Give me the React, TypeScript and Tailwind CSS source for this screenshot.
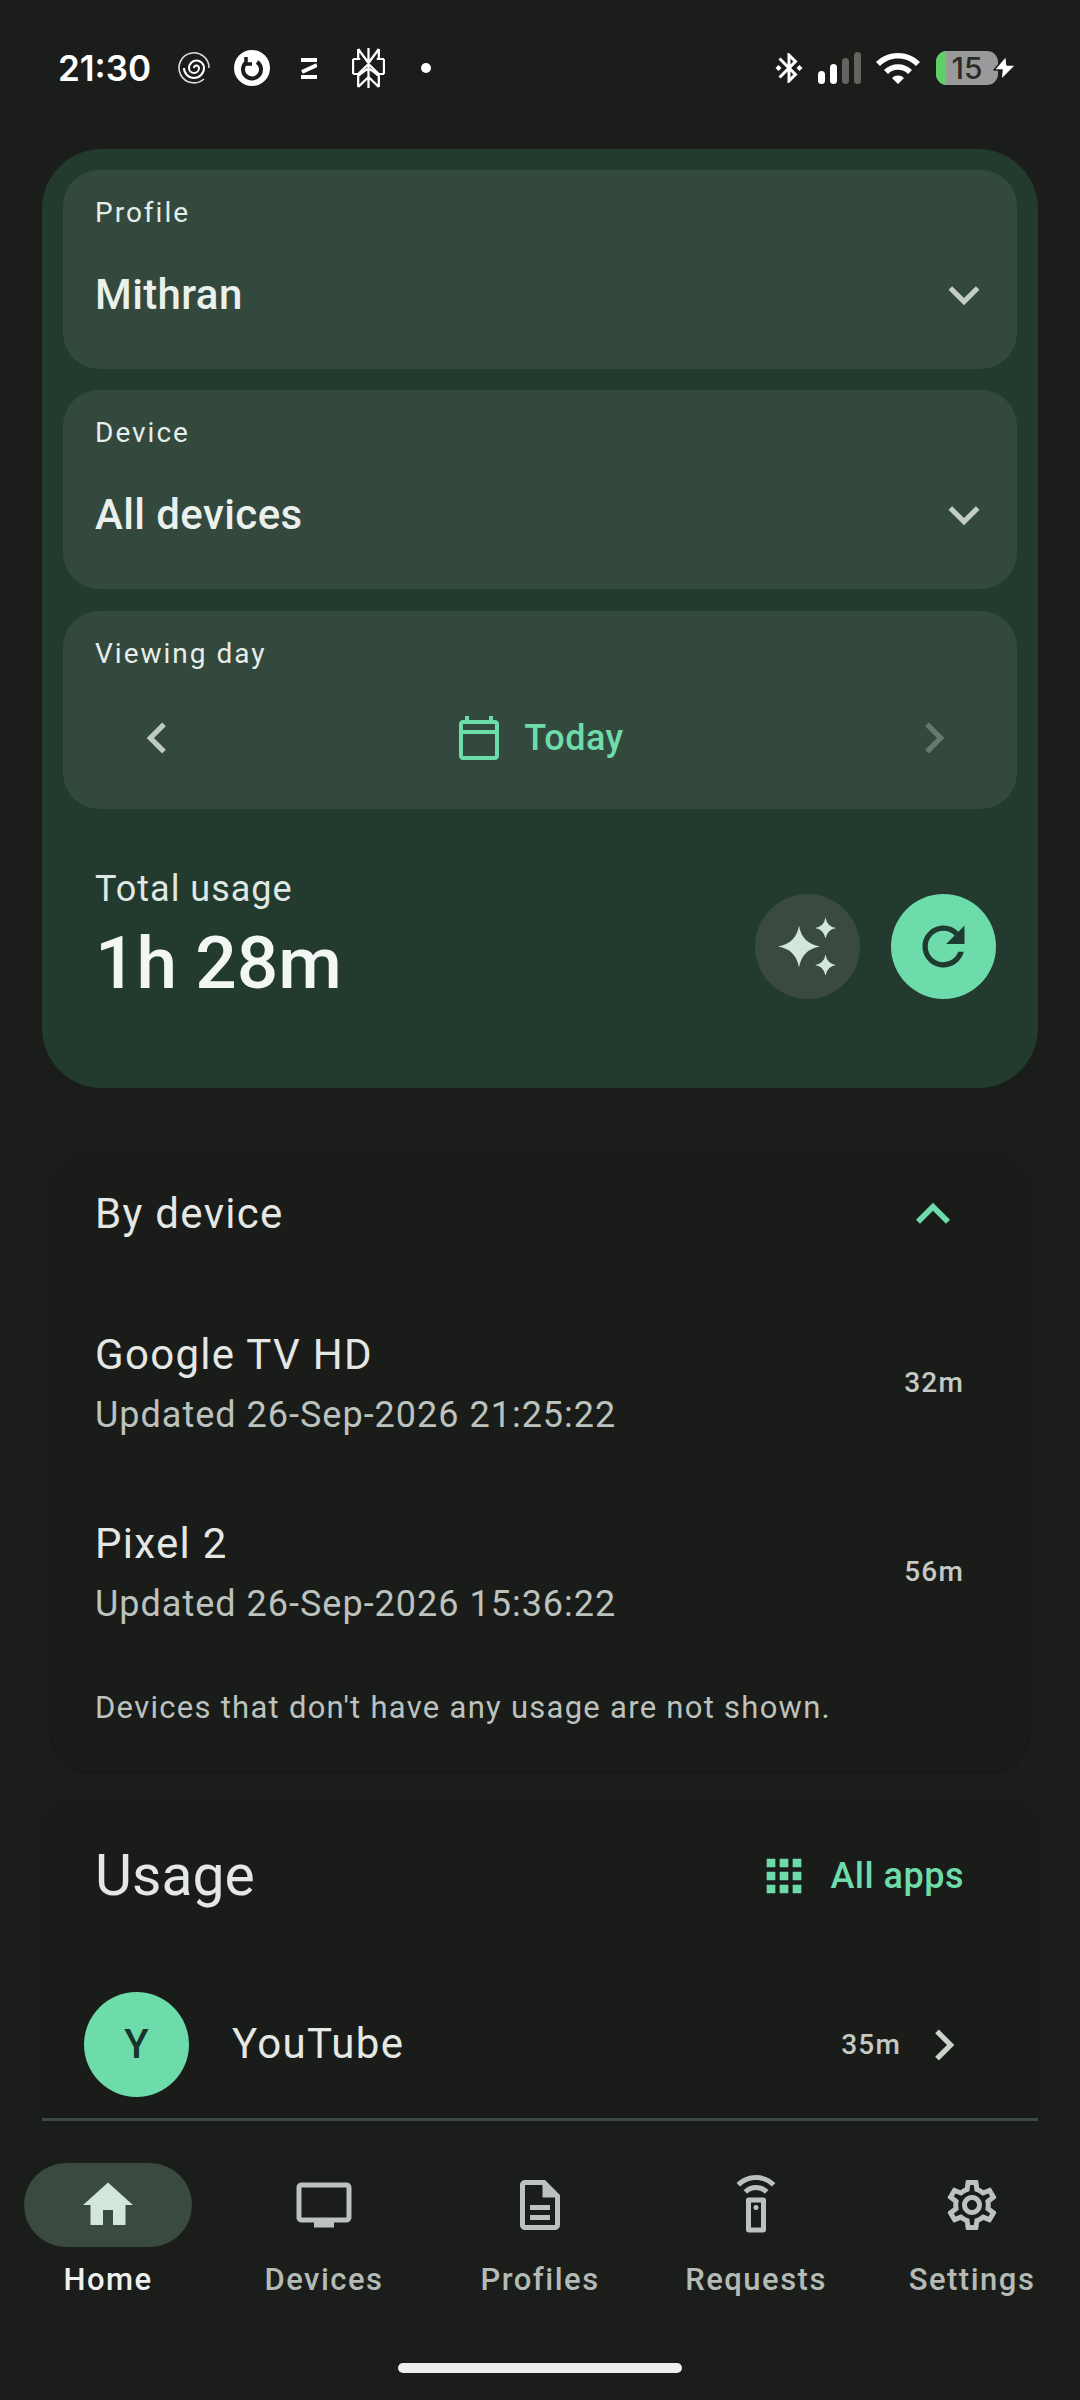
import React from "react";
import {
  MdBluetoothConnected,
  MdWifi,
  MdExpandMore,
  MdExpandLess,
  MdChevronLeft,
  MdChevronRight,
  MdOutlineCalendarToday,
  MdRefresh,
  MdApps,
  MdHome,
  MdOutlineTv,
  MdOutlineDescription,
  MdOutlineSettingsRemote,
  MdOutlineSettings,
} from "react-icons/md";

const StatusIcons = () => (
  <div className="flex items-center">
    <svg width="32" height="34" viewBox="0 0 32 34" className="ml-[27px]" fill="none" stroke="#fff">
      <path d="M26 28A15 15 0 1 1 31 17" strokeWidth="1.6" opacity="0.85" />
      <path d="M16 17a2.500 2.500 0 0 1 5 0a5 5 0 0 1-10 0a7.500 7.500 0 0 1 15 0a10 10 0 0 1-20 0" strokeWidth="2" />
    </svg>
    <svg width="36" height="36" viewBox="0 0 36 36" className="ml-[24px]">
      <circle cx="18" cy="18" r="18" fill="#fff" />
      <path d="M13 12a9 9 0 1 0 10 0" fill="none" stroke="#1b1d1b" strokeWidth="4" />
      <path d="M12 7v7h6" fill="none" stroke="#1b1d1b" strokeWidth="3.500" />
    </svg>
    <svg width="16" height="21" viewBox="0 0 16 21" className="ml-[31px]" fill="none" stroke="#fff" strokeWidth="4">
      <path d="M0 2h16 M16 7L1 14 M0 19h16" />
    </svg>
    <svg width="33" height="40" viewBox="0 0 32 40" preserveAspectRatio="none" className="ml-[35px]" fill="none" stroke="#fff" strokeWidth="2.2">
      <path d="M16 0v40 M6 1l10 14L26 1 M6 1v11 M26 1v11 M1 11h7 M24 11h7 M1 11v15 M31 11v15 M1 26h5l10-10 10 10h5 M6 39V28l10-8 10 8v11 M6 39l10-10 10 10" />
    </svg>
    <span className="ml-[36px] w-[10px] h-[10px] rounded-full bg-white" />
  </div>
);

const Battery = () => (
  <div className="flex items-center">
    <div className="relative w-[62px] h-[34px] rounded-[11px] bg-[#9a9a9a] overflow-hidden flex items-center justify-center">
      <div className="absolute left-0 top-0 bottom-0 w-[10px] bg-[#5fd068]" />
      <span className="relative text-[30px] leading-none font-medium text-[#2a2a2a] font-['Inter',sans-serif]">15</span>
    </div>
    <svg width="25" height="28" viewBox="0 0 25 28" className="-ml-[6px] relative">
      <path d="M14 2 2 16h8l-1 10L24 11h-9z" fill="#fff" stroke="#1b1d1b" strokeWidth="1.5" strokeLinejoin="round" />
    </svg>
  </div>
);

const StatusBar = () => (
  <div className="h-[149px] shrink-0 flex items-start justify-between pl-[58px] pr-[63px]">
    <div className="flex items-center h-[40px] mt-[48px]">
      <span className="text-[35px] leading-none font-semibold text-white font-['Inter',sans-serif]">21:30</span>
      <StatusIcons />
    </div>
    <div className="flex items-center h-[40px] mt-[48px]">
      <MdBluetoothConnected className="text-white w-[36px] h-[36px]" />
      <svg width="44" height="32" viewBox="0 0 44 32" className="ml-[11px]">
        <rect x="0" y="19" width="7" height="13" rx="3.5" fill="#fff" />
        <rect x="12" y="12" width="7" height="20" rx="3.5" fill="#fff" />
        <rect x="24" y="6" width="7" height="26" rx="3.5" fill="#62645f" />
        <rect x="36" y="0" width="7" height="32" rx="3.5" fill="#62645f" />
      </svg>
      <MdWifi className="text-white w-[48px] h-[48px] ml-[12px]" />
      <div className="ml-[14px]">
        <Battery />
      </div>
    </div>
  </div>
);

const SelectCard = ({ label, value }: { label: string; value: string }) => (
  <div className="h-[199px] rounded-[36px] bg-[#33493e] pl-[32px] pr-[22px] pt-[26px]">
    <div className="text-[28px] leading-[34px] tracking-[2px] text-[#e6eee9]">{label}</div>
    <div className="flex items-center justify-between mt-[34px]">
      <span className="text-[42px] leading-[54px] font-medium tracking-[0.4px] text-[#eaf0ec]">{value}</span>
      <MdExpandMore className="w-[62px] h-[62px] text-[#c3cdc6]" />
    </div>
  </div>
);

const Sparkles = () => (
  <svg width="60" height="60" viewBox="0 0 60 60" fill="#d3e6da">
    <path d="M21 8.500Q24 26.500 42 29.500Q24 32.500 21 50.500Q18 32.500 0 29.500Q18 26.500 21 8.500Z" />
    <path d="M47.500 .5Q49 9.500 58 11Q49 12.500 47.500 21.500Q46 12.500 37 11Q46 9.500 47.500 .5Z" />
    <path d="M47.500 37.500Q49 46.500 58 48Q49 49.500 47.500 58.500Q46 49.500 37 48Q46 46.500 47.500 37.500Z" />
  </svg>
);

const SummaryCard = () => (
  <div className="mx-[42px] h-[939px] rounded-[60px] bg-[#233a2f] p-[21px]">
    <div className="flex flex-col gap-[21px]">
      <SelectCard label="Profile" value="Mithran" />
      <SelectCard label="Device" value="All devices" />
      <div className="h-[198px] mt-[1px] rounded-[36px] bg-[#33493e] pl-[32px] pr-[30px] pt-[26px]">
        <div className="text-[28px] leading-[34px] tracking-[2px] text-[#e6eee9]">Viewing day</div>
        <div className="flex items-center justify-between mt-[36px] pl-[31px] pr-[22px]">
          <MdChevronLeft className="w-[62px] h-[62px] text-[#bfcac3]" />
          <div className="flex items-center gap-[21px] text-[#6edcaa] mr-[12px]">
            <MdOutlineCalendarToday className="w-[48px] h-[48px]" />
            <span className="text-[36px] leading-[44px] font-medium tracking-[0.5px]">Today</span>
          </div>
          <MdChevronRight className="w-[62px] h-[62px] text-[#69786f]" />
        </div>
      </div>
    </div>
    <div className="flex items-start justify-between mt-[60px] pl-[32px] pr-[21px]">
      <div>
        <div className="text-[36px] leading-[40px] tracking-[1px] text-[#dfe8e2]">Total usage</div>
        <div className="text-[73px] leading-[84px] font-medium text-[#f3f7f4] mt-[12px]">1h 28m</div>
      </div>
      <div className="flex items-center gap-[31px] mt-[25px]">
        <div className="w-[105px] h-[105px] rounded-full bg-[#3a4a41] flex items-center justify-center">
          <Sparkles />
        </div>
        <div className="w-[105px] h-[105px] rounded-full bg-[#6edcaa] flex items-center justify-center">
          <MdRefresh className="w-[63px] h-[63px] text-[#1f3a2e]" />
        </div>
      </div>
    </div>
  </div>
);

const DeviceRow = ({ name, updated, time }: { name: string; updated: string; time: string }) => (
  <div className="h-[189px] pl-[43px] pr-[64px] flex items-center justify-between">
    <div>
      <div className="text-[42px] leading-[60px] tracking-[1.3px] text-[#e4e7e4]">{name}</div>
      <div className="text-[36px] leading-[60px] tracking-[1px] text-[#bcc2bd]">{updated}</div>
    </div>
    <span className="text-[28px] leading-[36px] font-medium tracking-[1.2px] text-[#c4c9c4] mb-[4px]">{time}</span>
  </div>
);

const ByDevice = () => (
  <div className="mt-[66px] mx-[52px] h-[617px] rounded-[36px] bg-[#1a1c1a] shadow-[0_1px_3px_rgba(0,0,0,0.3)]">
    <div className="h-[120px] pl-[43px] pr-[61px] flex items-center justify-between">
      <span className="text-[42px] leading-[48px] tracking-[1.3px] text-[#e4e7e4]">By device</span>
      <MdExpandLess className="w-[68px] h-[68px] text-[#6edcaa]" />
    </div>
    <div className="mt-[16px]">
      <DeviceRow name="Google TV HD" updated="Updated 26-Sep-2026 21:25:22" time="32m" />
      <DeviceRow name="Pixel 2" updated="Updated 26-Sep-2026 15:36:22" time="56m" />
    </div>
    <div className="pl-[43px] text-[31px] leading-[40px] tracking-[1.27px] text-[#bcc2bd] mt-[20px]">
      Devices that don't have any usage are not shown.
    </div>
  </div>
);

const Usage = () => (
  <div className="mt-[29px] mx-[42px] rounded-t-[36px] bg-[#1a1c1a] h-[400px] shadow-[0_1px_3px_rgba(0,0,0,0.3)]">
    <div className="flex items-center justify-between pl-[53px] pr-[74px] pt-[2px] h-[150px]">
      <span className="text-[57px] leading-[64px] text-[#e4e7e4]">Usage</span>
      <div className="flex items-center gap-[20px] text-[#6edcaa]">
        <MdApps className="w-[52px] h-[52px]" />
        <span className="text-[36px] leading-[44px] font-medium tracking-[0.5px]">All apps</span>
      </div>
    </div>
    <div className="flex items-center pl-[42px] pr-[63px] mt-[42px]">
      <div className="w-[105px] h-[105px] rounded-full bg-[#6edcaa] flex items-center justify-center text-[40px] font-medium text-[#17352a]">Y</div>
      <span className="ml-[43px] text-[42px] leading-[48px] tracking-[1.3px] text-[#e4e7e4] mb-[2px]">YouTube</span>
      <span className="ml-auto text-[28px] leading-[36px] font-medium tracking-[1.2px] text-[#c4c9c4]">35m</span>
      <MdChevronRight className="w-[62px] h-[62px] ml-[12px] text-[#cdd2cd]" />
    </div>
  </div>
);

const navItems = [
  { label: "Home", Icon: MdHome, active: true },
  { label: "Devices", Icon: MdOutlineTv, active: false },
  { label: "Profiles", Icon: MdOutlineDescription, active: false },
  { label: "Requests", Icon: MdOutlineSettingsRemote, active: false },
  { label: "Settings", Icon: MdOutlineSettings, active: false },
];

const BottomNav = () => (
  <div className="shrink-0 h-[282px] bg-[#1b1d1b] flex flex-col">
    <div className="mx-[42px] h-[3px] bg-[#3d4a43]" />
    <div className="grid grid-cols-5 mt-[42px]">
      {navItems.map(({ label, Icon, active }) => (
        <div key={label} className="flex flex-col items-center">
          <div className={`w-[168px] h-[84px] rounded-full flex items-center justify-center ${active ? "bg-[#3a4a41]" : ""}`}>
            <Icon className={`w-[60px] h-[60px] ${active ? "text-[#d3e6da]" : "text-[#bcc2bd]"}`} />
          </div>
          <span className={`mt-[15px] text-[31px] leading-[36px] font-medium tracking-[1.5px] ${active ? "text-[#eef1ee]" : "text-[#b4bab5]"}`}>
            {label}
          </span>
        </div>
      ))}
    </div>
    <div className="mt-auto mb-[27px] mx-auto w-[284px] h-[10px] rounded-full bg-[#eeeeee]" />
  </div>
);

export default function App() {
  return (
    <div className="w-[1080px] h-[2400px] bg-[#1b1d1b] flex flex-col overflow-hidden font-['Roboto',sans-serif]">
      <StatusBar />
      <div className="flex-1 overflow-hidden">
        <SummaryCard />
        <ByDevice />
        <Usage />
      </div>
      <BottomNav />
    </div>
  );
}
